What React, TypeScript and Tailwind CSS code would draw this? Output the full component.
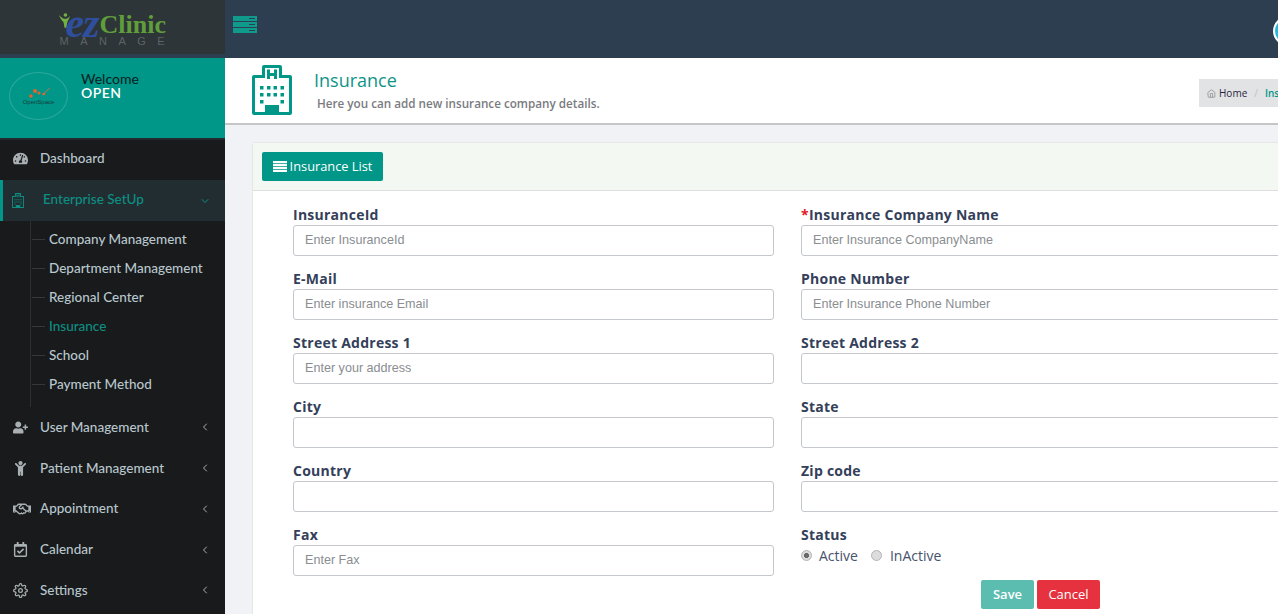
import type { ReactNode } from "react";
import {
  FaChild,
  FaRegCalendarCheck,
  FaRegHandshake,
  FaTachometerAlt,
  FaUserPlus,
} from "react-icons/fa";
import { FiChevronDown, FiChevronLeft, FiHome, FiSettings } from "react-icons/fi";

const subItems = [
  "Company Management",
  "Department Management",
  "Regional Center",
  "Insurance",
  "School",
  "Payment Method",
];

const menuFont = "font-['Lato','Liberation_Sans',sans-serif]";

function HospitalIcon({ className }: { className: string }) {
  return (
    <svg viewBox="0 0 40 50" className={className} fill="currentColor">
      <path
        fillRule="evenodd"
        d="M12 0h16a2 2 0 0 1 2 2v8h8a2 2 0 0 1 2 2v36a2 2 0 0 1-2 2H2a2 2 0 0 1-2-2V12a2 2 0 0 1 2-2h8V2a2 2 0 0 1 2-2Zm1 3v10H3v34h10v-7h14v7h10V13H27V3H13Z"
      />
      <path d="M15 4.500h3v3.500h4V4.500h3V14h-3v-3h-4v3h-3V4.500Z" />
      <path d="M8 21h3.500v3.500H8zM15 21h3.500v3.500H15zM21.500 21H25v3.500h-3.500zM28.500 21H32v3.500h-3.500zM8 28h3.500v3.500H8zM15 28h3.500v3.500H15zM21.500 28H25v3.500h-3.500zM28.500 28H32v3.500h-3.500zM8 35h3.500v3.500H8zM28.500 35H32v3.500h-3.500z" />
      <path d="M13 40h14v10H13z" />
    </svg>
  );
}

function MenuItem({ icon, label }: { icon: ReactNode; label: string }) {
  return (
    <div className="flex h-[40.75px] items-center pr-[14px] pl-[13px] text-[#b8c7ce]">
      <span className="flex w-[27px] shrink-0 text-[#a9b0b3]">{icon}</span>
      <span className="flex-1 pb-[1px] text-[13.5px] font-medium">{label}</span>
      <FiChevronLeft className="text-[12px] text-[#a9b0b3]" />
    </div>
  );
}

function Field({
  label,
  placeholder,
  required,
}: {
  label: string;
  placeholder?: string;
  required?: boolean;
}) {
  return (
    <div className="h-[64px]">
      <label className="block h-[20px] pt-[1px] text-[14px] leading-[18px] font-bold tracking-[0.25px] text-[#34405a]">
        {required && <span className="text-[#e02020]">*</span>}
        {label}
      </label>
      <input
        placeholder={placeholder}
        className="block h-[31px] w-full rounded-[3px] border border-[#c4c7cc] bg-white px-[11px] pb-[2px] font-['Liberation_Sans',sans-serif] text-[12.6px] placeholder:text-[#8a8d91]"
      />
    </div>
  );
}

function Logo() {
  return (
    <div className="flex h-[54px] justify-center bg-[#2e3538] pt-[10px] pl-[2px]">
      <div className="w-[110px] font-['Liberation_Serif',serif]">
        <div className="flex h-[27px] items-end leading-none whitespace-nowrap">
          <svg viewBox="0 0 12 16" className="mb-[8px] h-[17px] w-[11px] shrink-0 text-[#72b043]" fill="currentColor">
            <circle cx="7" cy="2" r="2" />
            <path d="M0 2c3 3 4 4 6 4h2c1 0 2-1 4-3-1 3-2 5-3 7l-1 6H6L5 10C3 8 1 5 0 2Z" />
          </svg>
          <span className="ml-[-4px] h-[27px] text-[42px] leading-[26px] font-bold tracking-[-1px] text-[#2f4f9e] italic">ez</span>
          <span className="ml-[1px] h-[27px] text-[26px] leading-[30px] font-bold text-[#5f9e3a]">Clinic</span>
        </div>
        <div className="h-[9px] pl-[1px] font-['Liberation_Sans',sans-serif] text-[11px] leading-[9px] tracking-[11.5px] whitespace-nowrap text-[#5d6365]">
          MANAGE
        </div>
      </div>
    </div>
  );
}

function UserPanel() {
  return (
    <div className="flex h-[80px] bg-[#009688]">
      <div className="mt-[14px] ml-[9px] flex h-[48px] w-[59px] flex-col items-center justify-center rounded-[50%] border border-[#2aa99c]">
        <svg viewBox="0 0 28 12" className="h-[12px] w-[28px]">
          <path d="M17 8 25 1" fill="none" stroke="#e8743a" strokeWidth="0.8" />
          <circle cx="6" cy="9" r="1.800" fill="#e8622a" />
          <circle cx="10" cy="4" r="2" fill="#e8622a" />
          <circle cx="14" cy="6" r="1.500" fill="#e8622a" />
          <circle cx="19" cy="7" r="1.300" fill="#e8622a" />
        </svg>
        <span className="font-['Liberation_Sans',sans-serif] text-[6px] leading-[6px] whitespace-nowrap text-[#12403b]">OpenSpace</span>
      </div>
      <div className={`ml-[13px] pt-[14px] text-[14px] leading-[14px] ${menuFont}`}>
        <div className="text-[#06201e]">Welcome</div>
        <div className="font-semibold tracking-[0.5px] text-white">OPEN</div>
      </div>
    </div>
  );
}

function Sidebar() {
  return (
    <aside className={`w-[225px] shrink-0 bg-[#181a1b] ${menuFont}`}>
      <UserPanel />
      <div className="h-[2px] bg-[#23292e]" />
      <div className="flex h-[38px] items-center pb-[2px] pl-[13px] text-[13.5px] font-medium text-[#b8c7ce]">
        <FaTachometerAlt className="mr-[12px] text-[15px] text-[#a9b0b3]" />
        Dashboard
      </div>
      <div className="mt-[2px] flex h-[41px] items-center border-l-[3px] border-[#009688] bg-[#222d32] pr-[14px] pl-[9px] text-[#0d8f82]">
        <span className="w-[31px]">
          <HospitalIcon className="h-[15px] w-[12px]" />
        </span>
        <span className="flex-1 pb-[3px] text-[13.5px] font-medium">Enterprise SetUp</span>
        <FiChevronDown className="text-[12px]" />
      </div>
      <ul className="ml-[30px] border-l border-[#2c3032] pt-[5px] pb-[7px] text-[13.5px] font-medium text-[#b8c7ce]">
        {subItems.map((item) => (
          <li key={item} className="flex h-[29px] items-center pb-[2px]">
            <span className="mr-[4px] ml-[1px] h-px w-[13px] bg-[#33383a]" />
            <span className={item === "Insurance" ? "text-[#0d8f82]" : ""}>{item}</span>
          </li>
        ))}
      </ul>
      <MenuItem icon={<FaUserPlus className="text-[15px]" />} label="User Management" />
      <MenuItem icon={<FaChild className="text-[15px]" />} label="Patient Management" />
      <MenuItem icon={<FaRegHandshake className="text-[18px]" />} label="Appointment" />
      <MenuItem icon={<FaRegCalendarCheck className="text-[15px]" />} label="Calendar" />
      <MenuItem icon={<FiSettings className="text-[15px]" />} label="Settings" />
    </aside>
  );
}

function TopBar() {
  return (
    <div className="flex h-[58px] shrink-0 bg-[#2c3e50]">
      <div className="w-[225px] shrink-0">
        <Logo />
      </div>
      <div className="flex flex-1 items-start justify-between overflow-hidden pt-[16px] pl-[8px]">
        <div className="flex w-[24px] flex-col gap-[1px]">
          {[0, 1, 2].map((i) => (
            <div key={i} className="flex h-[5px] items-center justify-end bg-[#0f9a8c] pr-[2px]">
              <span className="h-px w-[6px] bg-[#2c3e50]" />
            </div>
          ))}
        </div>
        <div className="h-[30px] w-[30px] shrink-0 translate-x-[25px] rounded-full border-2 border-white bg-[#29b6d8]" />
      </div>
    </div>
  );
}

function PageHeader() {
  return (
    <div className="flex h-[67px] shrink-0 border-b-2 border-[#c4c6c8] bg-white">
      <HospitalIcon className="mt-[7px] ml-[27px] h-[50px] w-[40px] text-[#009688]" />
      <div className="ml-[22px] flex-1 pt-[9px]">
        <h1 className="text-[18px] leading-[26px] text-[#0e9488]">Insurance</h1>
        <p className="mt-[2px] ml-[3px] text-[11.7px] leading-[17px] font-semibold text-[#7a7b80]">
          Here you can add new insurance company details.
        </p>
      </div>
      <div className="mt-[21px] flex h-[28px] w-[79px] items-center bg-[#e2e3e5] pl-[8px] text-[10px] font-medium whitespace-nowrap">
        <FiHome className="mr-[3px] shrink-0 text-[9px] text-[#8b8b8b]" />
        <span className="text-[#2a1f3d]">Home</span>
        <span className="mx-[7px] text-[#c2c2c2]">/</span>
        <span className="font-semibold text-[#009688]">Insurance</span>
      </div>
    </div>
  );
}

function ListIcon() {
  return (
    <svg viewBox="0 0 14 11" className="h-[11px] w-[14px] shrink-0" fill="currentColor">
      <path d="M0 0h14v2.200H0zM0 2.900h14v2.200H0zM0 5.800h14v2.200H0zM0 8.700h14V11H0z" />
    </svg>
  );
}

function FormCard() {
  return (
    <div className="mt-[17px] ml-[27px] w-[1060px] shrink-0 rounded-t-[3px] border border-[#e4e6e8] bg-white pb-[40px]">
      <div className="flex h-[48px] items-start border-b border-[#dcdedf] bg-[#f3f8f3] pt-[9px] pl-[9px]">
        <button className="flex h-[29px] w-[121px] items-center justify-center gap-[3px] rounded-[2px] bg-[#009688] text-[12.8px] text-white">
          <ListIcon />
          Insurance List
        </button>
      </div>
      <div className="grid grid-cols-[481px_481px] gap-x-[27px] pt-[14px] pl-[40px]">
        <Field label="InsuranceId" placeholder="Enter InsuranceId" />
        <Field label="Insurance Company Name" placeholder="Enter Insurance CompanyName" required />
        <Field label="E-Mail" placeholder="Enter insurance Email" />
        <Field label="Phone Number" placeholder="Enter Insurance Phone Number" />
        <Field label="Street Address 1" placeholder="Enter your address" />
        <Field label="Street Address 2" />
        <Field label="City" />
        <Field label="State" />
        <Field label="Country" />
        <Field label="Zip code" />
        <Field label="Fax" placeholder="Enter Fax" />
        <div>
          <div className="h-[20px] pt-[1px] text-[14px] leading-[18px] font-bold tracking-[0.25px] text-[#34405a]">Status</div>
          <div className="flex h-[21px] items-center text-[14px] text-[#46526c]">
            <input
              type="radio"
              name="status"
              defaultChecked
              className="mr-[7px] h-[11px] w-[11px] appearance-none rounded-full border border-[#b5b5b5] bg-[#dcdcdc] checked:bg-[radial-gradient(circle,#6a6a6a_35%,#dcdcdc_45%)]"
            />
            Active
            <input
              type="radio"
              name="status"
              className="mr-[8px] ml-[13px] h-[11px] w-[11px] appearance-none rounded-full border border-[#b5b5b5] bg-[#dcdcdc] checked:bg-[radial-gradient(circle,#6a6a6a_35%,#dcdcdc_45%)]"
            />
            InActive
          </div>
          <div className="mt-[14px] flex gap-[3px] pl-[180px]">
            <button className="h-[29px] w-[53px] rounded-[2px] bg-[#5bbcb0] text-[13px] font-semibold text-white">Save</button>
            <button className="h-[29px] w-[63px] rounded-[2px] bg-[#e5323e] text-[13px] text-white">Cancel</button>
          </div>
        </div>
      </div>
    </div>
  );
}

export default function App() {
  return (
    <div className="flex h-[614px] w-[1278px] flex-col overflow-hidden bg-[#f0f2f6] font-['Open_Sans',sans-serif]">
      <TopBar />
      <div className="flex min-h-0 flex-1">
        <Sidebar />
        <main className="flex min-w-0 flex-1 flex-col overflow-hidden">
          <PageHeader />
          <FormCard />
        </main>
      </div>
    </div>
  );
}
